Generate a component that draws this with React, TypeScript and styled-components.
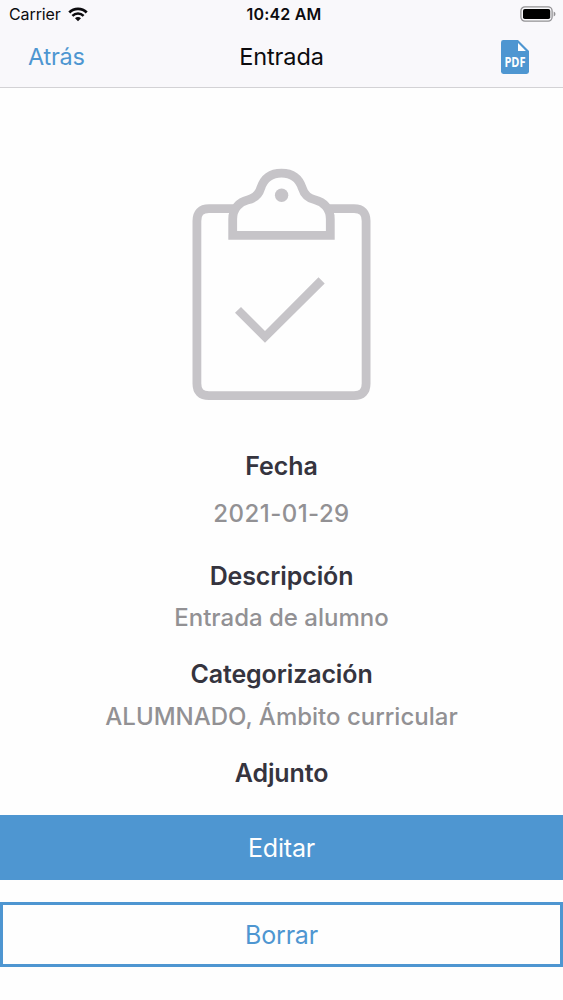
import React from 'react';
import styled, { createGlobalStyle } from 'styled-components';

const BLUE = '#4e96d1';

const GlobalStyle = createGlobalStyle`
  * { box-sizing: border-box; }
  body { margin: 0; background: #fefefe; font-family: Inter, "Liberation Sans", sans-serif; }
`;

const Screen = styled.div`
  display: flex;
  flex-direction: column;
  width: 100%;
  height: 1000px;
  overflow: hidden;
  background: #fefefe;
`;

const Header = styled.header`
  height: 88px;
  background: #f9f8fb;
  border-bottom: 1px solid #d3d2d5;
`;

const StatusBar = styled.div`
  display: grid;
  grid-template-columns: 1fr auto 1fr;
  align-items: center;
  height: 28px;
  padding: 0 7px 0 9px;
  font-size: 16px;
  color: #0c0b0e;
`;

const Carrier = styled.div`
  display: flex;
  align-items: center;
  gap: 7px;
  letter-spacing: -0.1px;
`;

const Clock = styled.div`
  padding-left: 3px;
  font-weight: 600;
  letter-spacing: 0.2px;
`;

const BatterySlot = styled.div`
  display: flex;
  justify-content: flex-end;
`;

const NavBar = styled.nav`
  display: grid;
  grid-template-columns: 1fr auto 1fr;
  align-items: center;
  height: 58px;
  padding: 0 34px 0 28px;
`;

const BackLink = styled.a`
  margin-bottom: 1px;
  font-size: 23.5px;
  letter-spacing: -0.25px;
  color: ${BLUE};
`;

const Title = styled.h1`
  margin: 0 0 1px;
  padding-left: 6px;
  font-size: 23.5px;
  font-weight: 400;
  letter-spacing: -0.1px;
  color: #0c0b0e;
`;

const PdfButton = styled.button`
  display: flex;
  justify-self: end;
  padding: 0;
  border: 0;
  background: none;
`;

const Content = styled.main`
  display: flex;
  flex-direction: column;
  align-items: center;
  padding-top: 80px;
`;

const Details = styled.dl`
  margin: 50px 0 0;
  text-align: center;
  line-height: 30px;
`;

const Label = styled.dt<{ $before?: number }>`
  margin-top: ${(p) => p.$before ?? 0}px;
  font-size: 25px;
  font-weight: 600;
  letter-spacing: -0.12px;
  color: #35343e;
`;

const Value = styled.dd<{ $before?: number; $spacing?: number }>`
  margin: ${(p) => p.$before ?? 0}px 0 0;
  font-size: 24px;
  font-weight: 500;
  letter-spacing: ${(p) => p.$spacing ?? 0}px;
  color: #929194;
`;

const Actions = styled.div`
  display: flex;
  flex-direction: column;
  gap: 22px;
  width: 100%;
  margin-top: 27px;
`;

const ActionButton = styled.button<{ $outlined?: boolean }>`
  width: 100%;
  height: 65px;
  padding: 1px 0 0;
  border: 3px solid ${BLUE};
  background: ${(p) => (p.$outlined ? '#fefefe' : BLUE)};
  color: ${(p) => (p.$outlined ? BLUE : '#fefefe')};
  font-family: inherit;
  font-size: 25px;
  font-weight: 400;
  letter-spacing: -0.2px;
`;

const WifiIcon = () => (
  <svg width="20" height="15" viewBox="0 0 20 15" fill="none" stroke="#0c0b0e">
    <path d="M1.3 5.5A12.4 12.4 0 0 1 18.7 5.5" strokeWidth="2.8" />
    <path d="M4.4 8.8A8 8 0 0 1 15.6 8.8" strokeWidth="2.5" />
    <path d="M10 14.2L7 11.2A4.2 4.2 0 0 1 13 11.2Z" fill="#0c0b0e" stroke="none" />
  </svg>
);

const BatteryIcon = () => (
  <svg width="36" height="16" viewBox="0 0 36 16">
    <rect x="0.9" y="0.9" width="31.2" height="14.2" rx="4" fill="none" stroke="#929194" strokeWidth="1.3" />
    <rect x="3" y="3" width="27.2" height="10" rx="1.8" fill="#000" />
    <path d="M33.7 5.5Q35.5 6.2 35.5 8T33.7 10.5Z" fill="#929194" />
  </svg>
);

const PdfIcon = () => (
  <svg width="28" height="34" viewBox="0 0 28 34">
    <path d="M2.4 0H17L28 11V31.6Q28 34 25.6 34H2.4Q0 34 0 31.6V2.4Q0 0 2.4 0Z" fill={BLUE} />
    <path d="M17 3V10.9H24.9Z" fill="#fefefe" />
    <text transform="translate(3.4 26.6) scale(0.8 1)" fill="#fefefe" fontFamily="Open Sans, sans-serif" fontSize="13.8" fontWeight="700">
      PDF
    </text>
  </svg>
);

const ClipboardIcon = () => (
  <svg width="179" height="233" viewBox="192 168 179 233" fill="none" stroke="#c6c4c8" strokeWidth="8.8">
    <path d="M238 208.7H209Q196.9 208.7 196.9 221V383.5Q196.9 395.7 209 395.7H354Q366.1 395.7 366.1 383.5V221Q366.1 208.7 354 208.7H325" />
    <path d="M232.7 235.4V219C232.7 208 240 201.8 247.5 200C255 198.5 259 194 260.8 188C264 178.5 271 173.2 281.5 173.2S299 178.5 302.2 188C304 194 308 198.5 315.5 200C323 201.8 330.3 208 330.3 219V235.4Z" />
    <circle cx="281.6" cy="195.3" r="6.7" fill="#c6c4c8" stroke="none" />
    <path d="M235 312.8L241 307L265 330.9L318.5 277.2L324.7 283.4L265 342.7Z" fill="#c6c4c8" stroke="none" />
  </svg>
);

export default function App() {
  return (
    <Screen>
      <GlobalStyle />
      <Header>
        <StatusBar>
          <Carrier>
            Carrier
            <WifiIcon />
          </Carrier>
          <Clock>10:42 AM</Clock>
          <BatterySlot>
            <BatteryIcon />
          </BatterySlot>
        </StatusBar>
        <NavBar>
          <BackLink>Atrás</BackLink>
          <Title>Entrada</Title>
          <PdfButton aria-label="PDF">
            <PdfIcon />
          </PdfButton>
        </NavBar>
      </Header>
      <Content>
        <ClipboardIcon />
        <Details>
          <Label>Fecha</Label>
          <Value $before={18} $spacing={0.45}>2021-01-29</Value>
          <Label $before={32}>Descripción</Label>
          <Value $before={12}>Entrada de alumno</Value>
          <Label $before={26}>Categorización</Label>
          <Value $before={13}>ALUMNADO, Ámbito curricular</Value>
          <Label $before={26}>Adjunto</Label>
        </Details>
        <Actions>
          <ActionButton>Editar</ActionButton>
          <ActionButton $outlined>Borrar</ActionButton>
        </Actions>
      </Content>
    </Screen>
  );
}
